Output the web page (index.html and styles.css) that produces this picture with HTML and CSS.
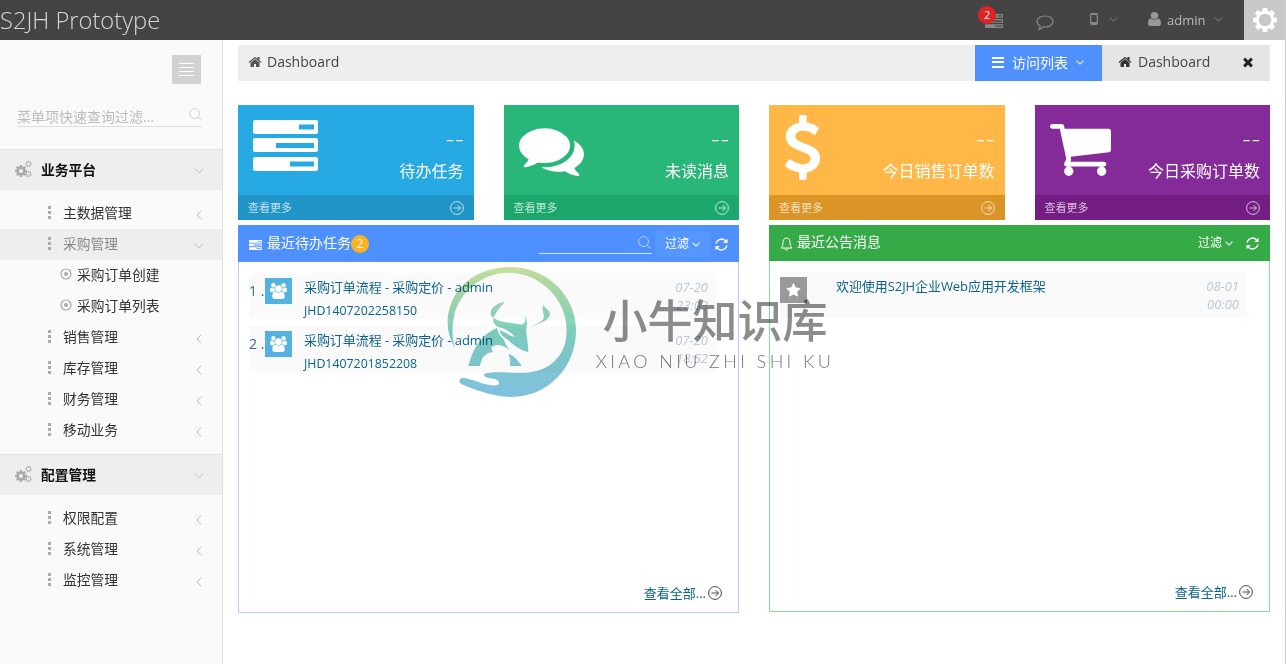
FILE: index.html
```html
<!DOCTYPE html>
<html lang="zh">
<head>
<meta charset="utf-8">
<title>S2JH Prototype</title>
<link rel="stylesheet" href="styles.css">
</head>
<body>
<svg class="sprite" xmlns="http://www.w3.org/2000/svg">
  <symbol id="i-server" viewBox="0 0 65 51" preserveAspectRatio="none"><path fill-rule="evenodd" d="M2 0h61a2 2 0 0 1 2 2v10a2 2 0 0 1-2 2H2a2 2 0 0 1-2-2V2a2 2 0 0 1 2-2zM46 4.500v5h15v-5zM2 18h61a2 2 0 0 1 2 2v10a2 2 0 0 1-2 2H2a2 2 0 0 1-2-2V20a2 2 0 0 1 2-2zM23 23v5h38v-5zM2 37h61a2 2 0 0 1 2 2v10a2 2 0 0 1-2 2H2a2 2 0 0 1-2-2V39a2 2 0 0 1 2-2zM37 41.500v5h24v-5z"/></symbol>
  <symbol id="i-comments" viewBox="0 128 1792 1536" preserveAspectRatio="none"><path d="M1408 768q0 139-94 257t-256.500 186.500-353.500 68.500q-86 0-176-16-124 88-278 128-36 9-86 16h-3q-11 0-20.500-8t-11.500-21q-1-3-1-6.500t.5-6.500 2-6l2.500-5 3.500-5.500 4-5 4.500-5 4-4.500q5-6 23-25t26-29.500 22.500-29 25-38.500 20.500-44q-124-72-195-177t-71-224q0-139 94-257t256.500-186.500 353.500-68.500 353.500 68.500 256.500 186.500 94 257zm384 256q0 120-71 224.500t-195 176.500q10 24 20.500 44t25 38.500 22.500 29 26 29.500 23 25q1 1 4 4.500t4.500 5 4 5 3.500 5.500l2.500 5 2 6 .5 6.500-1 6.500q-3 14-13 22t-22 7q-50-7-86-16-154-40-278-128-90 16-176 16-271 0-472-132 58 4 88 4 161 0 309-45t264-129q125-92 192-212t67-254q0-77-23-152 129 71 204 178t75 230z"/></symbol>
  <symbol id="i-dollar" viewBox="430 0 932 1792" preserveAspectRatio="none"><path d="M1362 1185q0 153-99.500 263.500t-258.500 136.500v175q0 14-9 23t-23 9h-135q-13 0-22.500-9.500t-9.500-22.500v-175q-66-9-127.500-31t-101.500-44.500-74-48-46.500-37.500-17.500-18q-17-21-2-41l103-135q7-10 23-12 15-2 24 9l2 2q113 99 243 125 37 8 74 8 81 0 142.500-43t61.500-122q0-28-15-53t-33.500-42-58.500-37.500-66-32-80-32.500q-39-16-61.500-25t-61.500-26.500-62.500-31-56.500-35.500-53.500-42.500-43.500-49-35.500-58-21-66.500-8.500-78q0-138 98-242t255-134v-180q0-13 9.500-22.500t22.500-9.500h135q14 0 23 9t9 23v176q57 6 110.500 23t87 33.500 63.500 37.500 39 29 15 14q17 18 5 38l-81 146q-8 15-23 16-14 3-27-7-3-3-14.500-12t-39-26.500-58.500-32-74.500-26-85.500-11.500q-95 0-155 43t-60 111q0 26 8.500 48t29.500 41.500 39.500 33 56 31 60.500 27 70 27.500q53 20 81 31.500t76 35 75.500 42.500 62 50 53 63.500 31.500 76.500 13 94z"/></symbol>
  <symbol id="i-cart" viewBox="64 256 1664 1408" preserveAspectRatio="none"><path d="M704 1536q0 52-38 90t-90 38-90-38-38-90 38-90 90-38 90 38 38 90zm896 0q0 52-38 90t-90 38-90-38-38-90 38-90 90-38 90 38 38 90zm128-1088v512q0 24-16.500 42.500t-40.500 21.500l-1044 122q13 60 13 70 0 16-24 64h920q26 0 45 19t19 45-19 45-45 19h-1024q-26 0-45-19t-19-45q0-11 8-31.500t16-36 21.500-40 15.500-29.500l-177-823h-204q-26 0-45-19t-19-45 19-45 45-19h256q16 0 28.500 6.500t19.500 15.500 13 24.500 8 26 5.500 29.500 4.500 26h1201q26 0 45 19t19 45z"/></symbol>
  <symbol id="i-home" viewBox="0 0 1792 1792"><path d="M1472 992v480q0 26-19 45t-45 19h-384v-384h-256v384h-384q-26 0-45-19t-19-45v-480q0-1 .5-3t.5-3l575-474 575 474q1 2 1 6zm223-69l-62 74q-8 9-21 11h-3q-13 0-21-7l-692-577-692 577q-12 8-24 7-13-2-21-11l-62-74q-8-10-7-23.500t11-21.500l719-599q32-26 76-26t76 26l244 204v-195q0-14 9-23t23-9h192q14 0 23 9t9 23v408l219 182q10 8 11 21.500t-7 23.500z"/></symbol>
  <symbol id="i-user" viewBox="256 128 1280 1536" preserveAspectRatio="none"><path d="M1536 1399q0 109-62.500 187t-150.500 78h-854q-88 0-150.500-78t-62.500-187q0-85 8.500-160.500t31.500-152 58.500-131 94-89 134.500-34.500q131 128 313 128t313-128q76 0 134.500 34.500t94 89 58.500 131 31.500 152 8.500 160.500zm-256-887q0 159-112.500 271.500t-271.500 112.500-271.500-112.500-112.500-271.500 112.500-271.500 271.500-112.500 271.500 112.500 112.500 271.500z"/></symbol>
  <symbol id="i-star" viewBox="0 0 1792 1792"><path d="M1728 647q0 22-26 48l-363 354 86 500q1 7 1 20 0 21-10.500 35.500t-30.500 14.500q-19 0-40-12l-449-236-449 236q-22 12-40 12-21 0-31.500-14.500t-10.500-35.500q0-6 2-20l86-500-364-354q-25-27-25-48 0-37 56-46l502-73 225-455q19-41 49-41t49 41l225 455 502 73q56 9 56 46z"/></symbol>
  <symbol id="i-times" viewBox="0 0 1792 1792"><path d="M1490 1322q0 40-28 68l-136 136q-28 28-68 28t-68-28l-294-294-294 294q-28 28-68 28t-68-28l-136-136q-28-28-28-68t28-68l294-294-294-294q-28-28-28-68t28-68l136-136q28-28 68-28t68 28l294 294 294-294q28-28 68-28t68 28l136 136q28 28 28 68t-28 68l-294 294 294 294q28 28 28 68z"/></symbol>
  <symbol id="i-users" viewBox="0 0 1920 1792"><path d="M593 896q-162 5-265 128h-134q-82 0-138-40.500t-56-118.500q0-353 124-353 6 0 43.500 21t97.500 42.500 119 21.500q67 0 133-23-5 37-5 66 0 139 81 256zm1071 637q0 120-73 189.500t-194 69.500h-874q-121 0-194-69.500t-73-189.500q0-53 3.500-103.500t14-109 26.500-108.500 43-97.500 62-81 85.500-53.500 111.500-20q10 0 43 21.500t73 48 107 48 135 21.500 135-21.500 107-48 73-48 43-21.500q61 0 111.500 20t85.500 53.500 62 81 43 97.500 26.500 108.500 14 109 3.500 103.500zm-1024-1277q0 106-75 181t-181 75-181-75-75-181 75-181 181-75 181 75 75 181zm704 384q0 159-112.500 271.500t-271.500 112.500-271.500-112.500-112.500-271.500 112.500-271.500 271.500-112.500 271.500 112.500 112.500 271.500zm576 225q0 78-56 118.500t-138 40.500h-134q-103-123-265-128 81-117 81-256 0-29-5-66 66 23 133 23 59 0 119-21.500t97.500-42.500 43.500-21q124 0 124 353zm-128-609q0 106-75 181t-181 75-181-75-75-181 75-181 181-75 181 75 75 181z"/></symbol>
  <symbol id="i-gear" viewBox="128 128 1536 1536"><path d="M1152 896q0-106-75-181t-181-75-181 75-75 181 75 181 181 75 181-75 75-181zm512-109v222q0 12-8 23t-20 13l-185 28q-19 54-39 91 35 50 107 138 10 12 10 25t-9 23q-27 37-99 108t-94 71q-12 0-26-9l-138-108q-44 23-91 38-16 136-29 186-7 28-36 28h-222q-14 0-24.500-8.500t-11.500-21.500l-28-184q-49-16-90-37l-141 107q-10 9-25 9-14 0-25-11-126-114-165-168-7-10-7-23 0-12 8-23 15-21 51-66.500t54-70.500q-27-50-41-99l-183-27q-13-2-21-12.500t-8-23.500v-222q0-12 8-23t19-13l186-28q14-46 39-92-40-57-107-138-10-12-10-24 0-10 9-23 26-36 98.500-107.500t94.500-71.500q13 0 26 10l138 107q44-23 91-38 16-136 29-186 7-28 36-28h222q14 0 24.500 8.500t11.500 21.500l28 184q49 16 90 37l142-107q9-9 24-9 13 0 25 10 129 119 165 170 7 8 7 22 0 12-8 23-15 21-51 66.500t-54 70.500q26 50 41 98l183 28q13 2 21 12.500t8 23.500z"/><circle cx="896" cy="896" r="400" fill="#c8c8c8"/></symbol>
  <symbol id="i-cogs" viewBox="0 0 18 17">
    <path transform="translate(0 3) scale(.0078)" d="M1152 896q0-106-75-181t-181-75-181 75-75 181 75 181 181 75 181-75 75-181zm512-109v222q0 12-8 23t-20 13l-185 28q-19 54-39 91 35 50 107 138 10 12 10 25t-9 23q-27 37-99 108t-94 71q-12 0-26-9l-138-108q-44 23-91 38-16 136-29 186-7 28-36 28h-222q-14 0-24.500-8.500t-11.500-21.500l-28-184q-49-16-90-37l-141 107q-10 9-25 9-14 0-25-11-126-114-165-168-7-10-7-23 0-12 8-23 15-21 51-66.500t54-70.500q-27-50-41-99l-183-27q-13-2-21-12.500t-8-23.500v-222q0-12 8-23t19-13l186-28q14-46 39-92-40-57-107-138-10-12-10-24 0-10 9-23 26-36 98.500-107.500t94.500-71.500q13 0 26 10l138 107q44-23 91-38 16-136 29-186 7-28 36-28h222q14 0 24.500 8.500t11.500 21.500l28 184q49 16 90 37l142-107q9-9 24-9 13 0 25 10 129 119 165 170 7 8 7 22 0 12-8 23-15 21-51 66.500t-54 70.500q26 50 41 98l183 28q13 2 21 12.500t8 23.500z"/>
    <circle cx="14.500" cy="3" r="2.300" fill="none" stroke="currentColor" stroke-width="1.500" stroke-dasharray="1.300 .5"/>
    <circle cx="14.500" cy="13" r="2.300" fill="none" stroke="currentColor" stroke-width="1.500" stroke-dasharray="1.300 .5"/>
  </symbol>
  <symbol id="i-refresh" viewBox="0 0 14 14"><g fill="none" stroke="currentColor" stroke-width="1.400"><path d="M1.200 6A5.900 5.900 0 0 1 11.300 3"/><path d="M12.800 8A5.900 5.900 0 0 1 2.700 11"/></g><path d="M13.500 .7v4.800H8.700zM.5 13.300V8.500h4.800z"/></symbol>
  <symbol id="i-arrow" viewBox="0 0 14 14"><g fill="none" stroke="currentColor"><circle cx="7" cy="7" r="6.400"/><path d="M3.500 7h7M7.500 4l3 3-3 3"/></g></symbol>
  <symbol id="i-down" viewBox="0 0 10 6"><path d="M.7.700 5 5 9.300.700" fill="none" stroke="currentColor"/></symbol>
  <symbol id="i-left" viewBox="0 0 6 10"><path d="M5.300.700 1 5l4.300 4.300" fill="none" stroke="currentColor"/></symbol>
  <symbol id="i-search" viewBox="0 0 14 14"><g fill="none" stroke="currentColor"><circle cx="6" cy="6" r="5.300"/><path d="m9.800 9.800 3.500 3.500"/></g></symbol>
  <symbol id="i-target" viewBox="0 0 12 12"><circle cx="6" cy="6" r="5" fill="none" stroke="currentColor" stroke-width="1.200"/><circle cx="6" cy="6" r="2"/></symbol>
  <symbol id="i-bell" viewBox="0 0 13 14"><path d="M6.500 1C4 1 3 3 3 5.500 3 8 2.300 9.800 1 11h11c-1.300-1.200-2-3-2-5.500C10 3 9 1 6.500 1zM5 11.500c0 2 3 2 3 0" fill="none" stroke="currentColor"/></symbol>
  <symbol id="i-bubble" viewBox="0 0 18 16"><path d="M9 1C4.600 1 1 3.400 1 6.500c0 1.900 1.300 3.500 3.300 4.500-.2 1.300-.6 2.500-1.300 3.500 1.700-.4 3.200-1.300 4.400-2.600.5.100 1 .1 1.600.1 4.400 0 8-2.400 8-5.500S13.400 1 9 1z" fill="none" stroke="currentColor"/></symbol>
  <symbol id="i-phone" viewBox="0 0 10 12" preserveAspectRatio="none"><path fill-rule="evenodd" d="M2 0h6a2 2 0 0 1 2 2v8a2 2 0 0 1-2 2H2a2 2 0 0 1-2-2V2a2 2 0 0 1 2-2zM1.500 2v7h7V2z"/></symbol>
  <linearGradient id="wm-grad-bull" gradientUnits="userSpaceOnUse" x1="0" y1="15" x2="0" y2="405"><stop offset="0" stop-color="#c6e09c"/><stop offset=".5" stop-color="#7dcfc0"/><stop offset="1" stop-color="#80bfe0"/></linearGradient>
</svg>

<header class="topbar">
  <div class="brand">S2JH Prototype</div>
  <nav class="top-nav">
    <span class="top-tasks"><svg class="ic ic-tasks"><use href="#i-server"/></svg><span class="badge-red">2</span></span>
    <svg class="ic ic-bubble"><use href="#i-bubble"/></svg>
    <svg class="ic ic-phone"><use href="#i-phone"/></svg>
    <svg class="ic ic-topdown ic-phonedown"><use href="#i-down"/></svg>
    <svg class="ic ic-user"><use href="#i-user"/></svg>
    <span class="top-name">admin</span>
    <svg class="ic ic-topdown ic-userdown"><use href="#i-down"/></svg>
    <span class="gear-box"><svg class="ic ic-gear"><use href="#i-gear"/></svg></span>
  </nav>
</header>

<div class="layout">
  <aside class="sidebar">
    <div class="toggle"><span></span><span></span><span></span><span></span></div>
    <div class="side-search">
      <input class="side-input" type="text" placeholder="菜单项快速查询过滤...">
      <svg class="ic ic-sidesearch"><use href="#i-search"/></svg>
    </div>

    <div class="sec"><svg class="ic ic-cogs"><use href="#i-cogs"/></svg><span class="sec-name">业务平台</span><svg class="ic ic-secdown"><use href="#i-down"/></svg></div>
    <ul class="menu">
      <li class="item"><i class="dots"></i><span class="item-name">主数据管理</span><svg class="ic ic-left"><use href="#i-left"/></svg></li>
      <li class="item active"><i class="dots"></i><span class="item-name">采购管理</span><svg class="ic ic-secdown"><use href="#i-down"/></svg></li>
      <li class="sub"><svg class="ic ic-target"><use href="#i-target"/></svg><span>采购订单创建</span></li>
      <li class="sub"><svg class="ic ic-target"><use href="#i-target"/></svg><span>采购订单列表</span></li>
      <li class="item"><i class="dots"></i><span class="item-name">销售管理</span><svg class="ic ic-left"><use href="#i-left"/></svg></li>
      <li class="item"><i class="dots"></i><span class="item-name">库存管理</span><svg class="ic ic-left"><use href="#i-left"/></svg></li>
      <li class="item"><i class="dots"></i><span class="item-name">财务管理</span><svg class="ic ic-left"><use href="#i-left"/></svg></li>
      <li class="item"><i class="dots"></i><span class="item-name">移动业务</span><svg class="ic ic-left"><use href="#i-left"/></svg></li>
    </ul>

    <div class="sec"><svg class="ic ic-cogs"><use href="#i-cogs"/></svg><span class="sec-name">配置管理</span><svg class="ic ic-secdown"><use href="#i-down"/></svg></div>
    <ul class="menu">
      <li class="item"><i class="dots"></i><span class="item-name">权限配置</span><svg class="ic ic-left"><use href="#i-left"/></svg></li>
      <li class="item"><i class="dots"></i><span class="item-name">系统管理</span><svg class="ic ic-left"><use href="#i-left"/></svg></li>
      <li class="item"><i class="dots"></i><span class="item-name">监控管理</span><svg class="ic ic-left"><use href="#i-left"/></svg></li>
    </ul>
  </aside>

  <main class="main">
    <div class="crumbs">
      <div class="crumb-bar"><svg class="ic ic-home"><use href="#i-home"/></svg><span>Dashboard</span></div>
      <div class="visit-btn">
        <span class="burger"><span></span><span></span><span></span></span>
        <span class="visit-label">访问列表</span>
        <svg class="ic ic-visitdown"><use href="#i-down"/></svg>
      </div>
      <div class="tab"><svg class="ic ic-home ic-tabhome"><use href="#i-home"/></svg><span class="tab-name">Dashboard</span><svg class="ic ic-times"><use href="#i-times"/></svg></div>
    </div>

    <section class="cards">
      <div class="card c-blue">
        <div class="card-body">
          <svg class="ic ic-card-server"><use href="#i-server"/></svg>
          <div class="card-info"><div class="card-num">--</div><div class="card-label">待办任务</div></div>
        </div>
        <div class="card-foot"><span>查看更多</span><svg class="ic ic-more"><use href="#i-arrow"/></svg></div>
      </div>
      <div class="card c-green">
        <div class="card-body">
          <svg class="ic ic-card-comments"><use href="#i-comments"/></svg>
          <div class="card-info"><div class="card-num">--</div><div class="card-label">未读消息</div></div>
        </div>
        <div class="card-foot"><span>查看更多</span><svg class="ic ic-more"><use href="#i-arrow"/></svg></div>
      </div>
      <div class="card c-yellow">
        <div class="card-body">
          <svg class="ic ic-card-dollar"><use href="#i-dollar"/></svg>
          <div class="card-info"><div class="card-num">--</div><div class="card-label">今日销售订单数</div></div>
        </div>
        <div class="card-foot"><span>查看更多</span><svg class="ic ic-more"><use href="#i-arrow"/></svg></div>
      </div>
      <div class="card c-purple">
        <div class="card-body">
          <svg class="ic ic-card-cart"><use href="#i-cart"/></svg>
          <div class="card-info"><div class="card-num">--</div><div class="card-label">今日采购订单数</div></div>
        </div>
        <div class="card-foot"><span>查看更多</span><svg class="ic ic-more"><use href="#i-arrow"/></svg></div>
      </div>
    </section>

    <section class="panels">
      <div class="panel p-blue">
        <div class="panel-head">
          <svg class="ic ic-head-server"><use href="#i-server"/></svg>
          <span class="panel-title">最近待办任务</span><span class="badge-yellow">2</span>
          <div class="head-search"><svg class="ic ic-headsearch"><use href="#i-search"/></svg></div>
          <div class="filter filter-box"><span>过滤</span><svg class="ic ic-filterdown"><use href="#i-down"/></svg></div>
          <svg class="ic ic-refresh"><use href="#i-refresh"/></svg>
        </div>
        <div class="panel-list">
          <div class="row">
            <span class="row-num">1 .</span>
            <span class="row-icon icon-users"><svg class="ic ic-users"><use href="#i-users"/></svg></span>
            <div class="row-text"><a class="link link-title">采购订单流程 - 采购定价 - admin</a><a class="link link-code">JHD1407202258150</a></div>
            <div class="row-time"><span>07-20</span><span>23:03</span></div>
          </div>
          <div class="row">
            <span class="row-num">2 .</span>
            <span class="row-icon icon-users"><svg class="ic ic-users"><use href="#i-users"/></svg></span>
            <div class="row-text"><a class="link link-title">采购订单流程 - 采购定价 - admin</a><a class="link link-code">JHD1407201852208</a></div>
            <div class="row-time"><span>07-20</span><span>18:52</span></div>
          </div>
        </div>
        <div class="panel-foot"><a class="link">查看全部...</a><svg class="ic ic-all"><use href="#i-arrow"/></svg></div>
      </div>

      <div class="panel p-green">
        <div class="panel-head">
          <svg class="ic ic-bell"><use href="#i-bell"/></svg>
          <span class="panel-title">最近公告消息</span>
          <div class="filter filter-plain"><span>过滤</span><svg class="ic ic-filterdown"><use href="#i-down"/></svg></div>
          <svg class="ic ic-refresh"><use href="#i-refresh"/></svg>
        </div>
        <div class="panel-list">
          <div class="row">
            <span class="row-icon icon-star"><svg class="ic ic-star"><use href="#i-star"/></svg></span>
            <div class="row-text text-wide"><a class="link link-title">欢迎使用S2JH企业Web应用开发框架</a></div>
            <div class="row-time"><span>08-01</span><span>00:00</span></div>
          </div>
        </div>
        <div class="panel-foot"><a class="link">查看全部...</a><svg class="ic ic-all"><use href="#i-arrow"/></svg></div>
      </div>
    </section>
  </main>
</div>

<div class="watermark">
  <svg class="wm-logo" viewBox="0 0 435 420" xmlns="http://www.w3.org/2000/svg">
    <g fill="url(#wm-grad-bull)">
      <path d="M45 260C20 215 15 170 35 120 65 50 135 15 210 15c110 0 198 85 198 190 0 115-88 200-193 200-55 0-105-20-150-38-13-7-7-22 10-19 30 7 65 24 95 22 12-4 8-18-10-20-15 0-30-5-28-13 8-9 68-5 118-5 80 0 130-52 130-127 0-95-80-173-175-173-75 0-140 53-160 118-10 40-10 75 0 110z"/>
      <path d="M195 119c-28 5-44 20-43 36 3 17 33 25 63 28 20 3 30 7 35 2 6-7 8-15 6-27 6 17 6 32 2 47 4 30 7 50 7 65-15-2-40-15-60-35-15-10-27-20-25-30 15 5 30 17 45 20-12-14-27-24-50-30-18-8-20-25-8-40 6-12 16-22 28-36z"/>
      <path d="M172 197c-42 18-72 53-87 115h35c5-27 20-47 45-62 15-5 35 5 50 20-15-12-20-30-25-40-10-8-18-20-18-33z"/>
      <path d="M130 285c2-15 10-27 22-32 3 7 4 12 6 18-12 0-20 6-28 14zM205 275c15 5 30 20 40 37h-35c2-12 0-25-5-37z"/>
      <path d="M310 128c4 9 12 12 18 20 6 12-4 24-15 30-14 6-28 12-43 17 13-8 30-12 38-22 7-9 2-18 0-27-1-6 0-12 2-18z"/>
    </g>
  </svg>
  <div class="wm-text">
    <div class="wm-cn">小牛知识库</div>
    <div class="wm-en">XIAO NIU ZHI SHI KU</div>
  </div>
</div>
</body>
</html>
```
FILE: styles.css
```css
* { box-sizing: border-box; }
html, body { margin: 0; padding: 0; height: 100%; }
body {
  width: 1286px;
  height: 664px;
  overflow: hidden;
  position: relative;
  background: #fff;
  color: #333;
  font-family: "Open Sans", "Noto Sans CJK SC", sans-serif;
  font-size: 13px;
  display: flex;
  flex-direction: column;
  border-right: 1px solid #ccc;
}
ul { list-style: none; margin: 0; padding: 0; }
.sprite { position: absolute; width: 0; height: 0; overflow: hidden; }
.ic { display: block; flex: none; fill: currentColor; }

/* top bar */
.topbar {
  flex: none;
  height: 40px;
  margin-right: -1px;
  background: #444;
  display: flex;
  align-items: center;
  justify-content: space-between;
}
.brand { font-size: 23.700px; font-weight: 300; color: #d6d6d6; line-height: 36px; }
.top-nav { display: flex; align-items: center; height: 40px; color: #888; }
.top-tasks { position: relative; display: block; width: 18px; height: 14px; margin-top: 2px; }
.ic-tasks { width: 18px; height: 14px; }
.badge-red {
  position: absolute;
  left: -7px;
  top: -8px;
  width: 18px;
  height: 18px;
  border-radius: 50%;
  background: #e02222;
  color: #fff;
  font-size: 11px;
  line-height: 17px;
  text-align: center;
}
.ic-bubble { width: 18px; height: 16px; margin-left: 33px; margin-top: 5px; color: #8a8a8a; stroke-width: 1.200; }
.ic-phone { width: 8px; height: 12px; margin-left: 35.700px; margin-top: -2px; }
.ic-topdown { width: 9px; height: 5px; margin-top: -1px; stroke-width: 1.200; }
.ic-phonedown { margin-left: 11.300px; }
.ic-userdown { margin-left: 8.500px; }
.ic-user { width: 13px; height: 14px; margin-left: 30px; margin-top: -2px; color: #999; }
.top-name { margin-left: 6px; font-size: 13px; color: #bbb; margin-top: -1px; }
.gear-box {
  margin-left: 21px;
  width: 42px;
  height: 40px;
  background: #c8c8c8;
  display: flex;
  align-items: center;
  justify-content: center;
}
.ic-gear { width: 24px; height: 24px; color: #fff; }

/* layout */
.layout { flex: 1; display: flex; min-height: 0; }

/* sidebar */
.sidebar {
  flex: none;
  width: 223px;
  background: #fafafa;
  border-right: 1px solid #e2e2e2;
}
.toggle {
  width: 29px;
  height: 29px;
  margin: 15px 0 0 172px;
  background: #d2d2d2;
  display: flex;
  flex-direction: column;
  justify-content: center;
  align-items: center;
  gap: 3px;
}
.toggle span { display: block; width: 15px; height: 1px; background: #fff; }
.side-search {
  display: flex;
  align-items: center;
  width: 185px;
  height: 20px;
  margin: 23px 0 0 17px;
  border-bottom: 1px solid #ddd;
}
.side-input {
  flex: 1;
  min-width: 0;
  border: 0;
  padding: 0;
  outline: 0;
  background: transparent;
  font: 14px "Open Sans", "Noto Sans CJK SC", sans-serif;
  color: #999;
}
.side-input::placeholder { color: #bbb; opacity: 1; }
.ic-sidesearch { width: 13px; height: 13px; margin-left: 4px; margin-top: -5px; color: #ccc; }
.sec {
  height: 41px;
  margin-top: 22px;
  background: #eee;
  border-top: 1px solid #e2e2e2;
  display: flex;
  align-items: center;
  padding-left: 14px;
}
.ic-cogs { width: 18px; height: 17px; color: #aaa; margin-top: -1px; }
.sec-name { margin-left: 9px; margin-top: -3px; font-size: 13.750px; font-weight: 600; color: #111; flex: 1; }
.ic-secdown { width: 10px; height: 6px; margin-right: 18px; margin-top: 2px; color: #c4c4c4; }
.menu { padding: 8px 0 8px; }
.menu + .sec { margin-top: 0; }
.item, .sub { height: 31px; display: flex; align-items: center; font-size: 13.750px; color: #333; padding-bottom: 3px; }
.item { padding-left: 48px; }
.dots {
  display: block;
  flex: none;
  width: 3px;
  height: 13px;
  background: repeating-linear-gradient(#aaa 0 3px, transparent 3px 5px);
}
.item-name { margin-left: 12px; flex: 1; }
.item .ic-left { width: 6px; height: 10px; margin-right: 20px; margin-top: 6px; color: #bbb; }
.item.active { background: #eee; color: #888; }
.item.active .ic-secdown { margin-top: 5px; }
.sub { padding-left: 60px; }
.ic-target { width: 12px; height: 12px; margin-right: 5px; color: #aaa; }

/* main */
.main { flex: 1; min-width: 0; padding: 5px 15px 0; }
.crumbs { display: flex; height: 36px; }
.crumb-bar {
  flex: 1;
  background: #eee;
  display: flex;
  align-items: center;
  padding-left: 10px;
  padding-bottom: 3px;
  font-size: 14px;
  color: #444;
}
.ic-home { width: 14px; height: 14px; color: #555; margin-right: 5px; }
.visit-btn {
  flex: none;
  width: 127px;
  background: #4d90fe;
  color: #fff;
  display: flex;
  align-items: center;
  padding-left: 17px;
  padding-bottom: 3px;
  font-size: 14px;
}
.burger { display: flex; flex-direction: column; gap: 2.500px; width: 12px; margin-top: 1px; }
.burger span { display: block; height: 2px; background: #fff; }
.visit-label { margin-left: 8px; }
.ic-visitdown { width: 8px; height: 5px; margin-left: 8px; margin-top: 1px; stroke-width: 1.300; }
.tab {
  flex: none;
  width: 168px;
  background: #e5e5e5;
  display: flex;
  align-items: center;
  padding-left: 16px;
  padding-bottom: 3px;
  font-size: 14px;
  color: #444;
}
.ic-tabhome { color: #333; margin-right: 6px; }
.tab-name { flex: 1; }
.ic-times { width: 14px; height: 14px; margin-right: 15px; color: #222; }

/* stat cards */
.cards { display: grid; grid-template-columns: repeat(4, 1fr); column-gap: 30px; margin-top: 24px; }
.card { height: 115px; color: #fff; display: flex; flex-direction: column; }
.card-body { height: 90px; display: flex; justify-content: space-between; }
.card-foot {
  height: 25px;
  display: flex;
  align-items: center;
  justify-content: space-between;
  padding: 0 10px;
  font-size: 11px;
  color: rgba(255, 255, 255, .72);
}
.card-foot span { margin-top: -2px; }
.card-info { padding-right: 10px; text-align: right; display: flex; flex-direction: column; align-items: flex-end; }
.card-num { margin-top: 18px; height: 30px; font-size: 26px; font-weight: 300; line-height: 30px; letter-spacing: 1px; margin-right: -1px; }
.card-label { margin-top: 6px; font-size: 16px; line-height: 24px; white-space: nowrap; }
.ic-card-server { width: 65px; height: 51px; margin: 15px 0 0 15px; }
.ic-card-comments { width: 65px; height: 52px; margin: 19px 0 0 15px; }
.ic-card-dollar { width: 35px; height: 65px; margin: 10px 0 0 16px; }
.ic-card-cart { width: 61px; height: 52px; margin: 19px 0 0 15px; }
.ic-more { width: 14px; height: 14px; }
.c-blue { background: #27a9e3; }
.c-blue .card-foot { background: #2295c8; }
.c-green { background: #28b779; }
.c-green .card-foot { background: #1ca86c; }
.c-yellow { background: #ffb848; }
.c-yellow .card-foot { background: #db9527; }
.c-purple { background: #852b99; }
.c-purple .card-foot { background: #741d83; }

/* panels */
.panels { display: grid; grid-template-columns: 1fr 1fr; column-gap: 30px; margin-top: 5px; align-items: start; }
.panel { display: flex; flex-direction: column; border: 1px solid; border-top: 0; }
.p-blue { height: 388px; border-color: #b5cefc; }
.p-green { height: 387px; border-color: #86de8f; }
.panel-head {
  flex: none;
  margin: 0 -1px;
  display: flex;
  align-items: center;
  color: #fff;
  padding: 0 11px;
  font-size: 14px;
}
.p-blue .panel-head { height: 37px; background: #4d90fe; }
.p-green .panel-head { height: 36px; background: #35aa47; }
.ic-head-server { width: 13px; height: 10px; margin-top: 2px; }
.panel-title { margin-top: -4px; }
.p-blue .panel-title { margin-left: 5px; }
.p-green .panel-title { margin-left: 4px; flex: 1; }
.ic-bell { width: 13px; height: 14px; margin-top: 2px; }
.badge-yellow {
  width: 18px;
  height: 18px;
  border-radius: 50%;
  background: #fcb322;
  color: #fff;
  font-size: 12px;
  line-height: 18px;
  text-align: center;
  margin-top: 1px;
}
.head-search {
  width: 113px;
  height: 20px;
  margin-left: 170px;
  margin-top: 1px;
  border-bottom: 1px solid #d6e6ff;
  display: flex;
  align-items: center;
  justify-content: flex-end;
}
.ic-headsearch { width: 13px; height: 13px; margin-top: -3px; margin-right: 1px; color: #c5d9fb; }
.filter { display: flex; align-items: center; font-size: 12px; }
.filter span { margin-top: -2px; }
.filter-box { margin-left: 3px; width: 55px; height: 26px; background: #5697ff; padding-left: 10px; margin-top: 1px; }
.ic-filterdown { width: 8px; height: 5px; margin-left: 3px; stroke-width: 1.300; }
.ic-refresh { width: 13px; height: 13px; margin-left: 5px; margin-top: 1px; }
.filter-plain + .ic-refresh { margin-left: 13px; }
.panel-list { flex: 1; padding: 11px 22px 0 10px; display: flex; flex-direction: column; gap: 7px; }
.row { height: 46px; background: #fafafa; display: flex; align-items: flex-start; }
.row-num { width: 16px; font-size: 14px; line-height: 36px; color: #3b6a86; }
.row-icon { width: 27px; height: 26px; margin-top: 5px; display: flex; align-items: center; justify-content: center; color: #fff; }
.icon-users { background: #54b2e3; }
.icon-star { background: #999; }
.ic-users { width: 17px; height: 16px; }
.ic-star { width: 15px; height: 15px; }
.row-text { flex: 1; margin-left: 12px; display: flex; flex-direction: column; line-height: 23px; padding-top: 3px; }
.text-wide { margin-left: 29px; }
.link { color: #0d638f; font-size: 13px; }
.link-title { letter-spacing: -.07px; }
.link-code { font-size: 12.350px; }
.row-time {
  padding: 5px 8px 0 0;
  display: flex;
  flex-direction: column;
  align-items: flex-end;
  font-style: italic;
  color: #bcc8d4;
  line-height: 18px;
  font-size: 13px;
}
.panel-foot {
  flex: none;
  height: 38px;
  display: flex;
  align-items: flex-start;
  justify-content: flex-end;
  padding: 9px 16px 0 0;
  line-height: 20px;
}
.ic-all { width: 14px; height: 14px; margin: 3px 0 0 2px; color: #444; }

/* watermark */
.watermark {
  position: absolute;
  left: 440px;
  top: 262px;
  display: flex;
  pointer-events: none;
  mix-blend-mode: multiply;
}
.wm-logo { width: 145px; height: 140px; display: block; flex: none; }
.wm-text { margin-left: 10px; width: 240px; margin-top: 29px; text-align: center; }
.wm-cn {
  font-family: "Noto Sans CJK SC", sans-serif;
  font-size: 45px;
  font-weight: 500;
  line-height: 56px;
  color: #8c8c8c;
  white-space: nowrap;
}
.wm-en {
  font-family: Lato, sans-serif;
  font-weight: 300;
  font-size: 18px;
  line-height: 20px;
  letter-spacing: 3.400px;
  color: #777;
  white-space: nowrap;
  margin-top: 4px;
}
```
